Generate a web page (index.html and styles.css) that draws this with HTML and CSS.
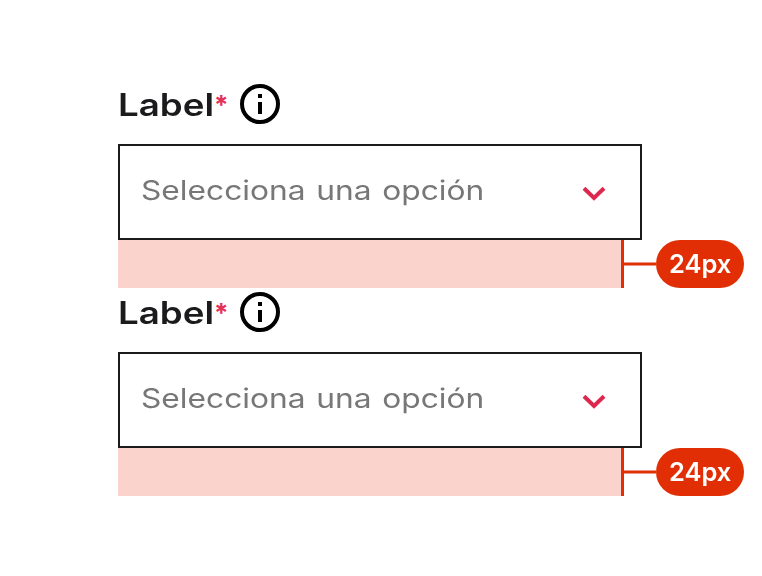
FILE: index.html
```html
<!DOCTYPE html>
<html lang="es">
<head>
<meta charset="utf-8">
<title>Select</title>
<link rel="stylesheet" href="styles.css">
</head>
<body>
<main class="stack">
  <section class="field">
    <div class="field-header">
      <span class="label"><span class="label-text">Label</span></span>
      <span class="required">*</span>
      <svg class="info" viewBox="0 0 40 40"><circle cx="20" cy="20" r="18" fill="none" stroke="#000" stroke-width="4"/><path d="M18 10h4v4h-4zM18 18h4v12h-4z"/></svg>
    </div>
    <div class="select">
      <span class="placeholder">Selecciona una opción</span>
      <svg class="chevron" viewBox="0 0 24 16"><path d="M2 2.2l10 9.8 10-9.8" fill="none" stroke="#dd274f" stroke-width="4"/></svg>
    </div>
    <div class="spacing">
      <div class="spacing-area"></div>
      <svg class="connector" viewBox="0 0 32 48"><path d="M0 24h32" stroke="#e12e05" stroke-width="3"/></svg>
      <div class="badge"><span class="badge-text">24px</span></div>
    </div>
  </section>
  <section class="field">
    <div class="field-header">
      <span class="label"><span class="label-text">Label</span></span>
      <span class="required">*</span>
      <svg class="info" viewBox="0 0 40 40"><circle cx="20" cy="20" r="18" fill="none" stroke="#000" stroke-width="4"/><path d="M18 10h4v4h-4zM18 18h4v12h-4z"/></svg>
    </div>
    <div class="select">
      <span class="placeholder">Selecciona una opción</span>
      <svg class="chevron" viewBox="0 0 24 16"><path d="M2 2.2l10 9.8 10-9.8" fill="none" stroke="#dd274f" stroke-width="4"/></svg>
    </div>
    <div class="spacing">
      <div class="spacing-area"></div>
      <svg class="connector" viewBox="0 0 32 48"><path d="M0 24h32" stroke="#e12e05" stroke-width="3"/></svg>
      <div class="badge"><span class="badge-text">24px</span></div>
    </div>
  </section>
</main>
</body>
</html>
```
FILE: styles.css
```css
* { box-sizing: border-box; }
body {
  margin: 0;
  background: #fff;
  font-family: Inter, sans-serif;
}
.stack {
  display: flex;
  flex-direction: column;
  padding: 80px 0 80px 118px;
}
.field { width: 626px; }
.field-header {
  display: flex;
  height: 64px;
  padding-top: 4px;
}
.label {
  width: 96px;
  line-height: 42px;
  font-size: 31px;
  font-weight: 600;
  color: #1b1b1d;
}
.label-text {
  display: inline-block;
  transform: scaleX(1.185);
  transform-origin: 0 50%;
  will-change: transform;
}
.required {
  width: 26px;
  line-height: 42px;
  font-size: 26px;
  font-weight: 700;
  color: #e5305a;
}
.info { width: 40px; height: 40px; }
.select {
  display: flex;
  align-items: center;
  justify-content: space-between;
  width: 524px;
  height: 96px;
  padding: 0 34px 0 21px;
  border: 2px solid #1b1b1d;
}
.placeholder {
  display: inline-block;
  margin-top: -3px;
  font-size: 27px;
  line-height: 40px;
  word-spacing: 1.5px;
  color: #777;
  white-space: nowrap;
  transform: scaleX(1.175);
  transform-origin: 0 50%;
  will-change: transform;
}
.chevron { width: 24px; height: 16px; margin-top: 4px; }
.spacing { display: flex; height: 48px; }
.spacing-area {
  width: 506px;
  background: #fad4cc;
  border-right: 3px solid #e12e05;
}
.connector { width: 32px; height: 48px; }
.badge {
  width: 88px;
  height: 48px;
  border-radius: 24px;
  background: #e12e05;
  color: #fff;
  font-size: 25.5px;
  font-weight: 600;
  line-height: 48px;
  text-align: center;
}
.badge-text { display: inline-block; will-change: transform; }
```
